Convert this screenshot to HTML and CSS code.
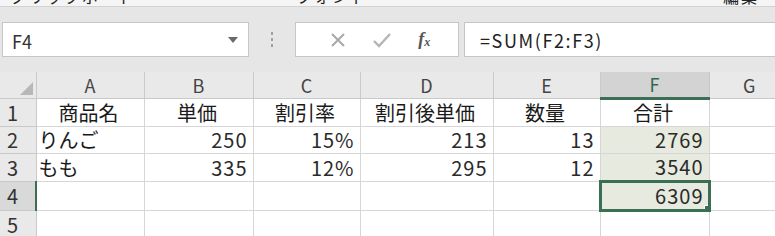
FILE: index.html
```html
<!DOCTYPE html>
<html lang="ja">
<head>
    <meta charset="UTF-8">
    <title>Sheet</title>
    <link rel="stylesheet" href="styles.css">
</head>
<body>
    <div class="ribbon-tail">
        <span class="group-label left">クリップボード</span>
        <span class="group-label mid">フォント</span>
        <span class="group-label right">編集</span>
    </div>

    <div class="formula-bar">
        <div class="name-box">
            <span>F4</span>
            <svg class="drop" width="10" height="6" viewBox="0 0 10 6"><path d="M0 0h10L5 6z" fill="#6a6a6a"/></svg>
        </div>
        <div class="grip">
            <i></i><i></i><i></i>
        </div>
        <div class="fn-buttons">
            <svg width="16" height="16" viewBox="0 0 16 16"><path d="M2 2l12 12M14 2L2 14" stroke="#a8a8a8" stroke-width="2" fill="none"/></svg>
            <svg width="18" height="16" viewBox="0 0 18 16"><path d="M1 9l5 5L17 2" stroke="#b4b4b4" stroke-width="2.4" fill="none"/></svg>
            <span class="fx">f<sub>x</sub></span>
        </div>
        <div class="formula-input">=SUM(F2:F3)</div>
    </div>

    <table class="sheet">
        <colgroup>
            <col style="width:36px">
            <col style="width:108px">
            <col style="width:109px">
            <col style="width:107px">
            <col style="width:133px">
            <col style="width:107px">
            <col style="width:109px">
            <col>
        </colgroup>
        <thead>
            <tr>
                <th class="corner"><span class="tri"></span></th>
                <th>A</th>
                <th>B</th>
                <th>C</th>
                <th>D</th>
                <th>E</th>
                <th class="active-col">F</th>
                <th>G</th>
            </tr>
        </thead>
        <tbody>
            <tr>
                <th>1</th>
                <td class="c">商品名</td>
                <td class="c">単価</td>
                <td class="c">割引率</td>
                <td class="c">割引後単価</td>
                <td class="c">数量</td>
                <td class="c">合計</td>
                <td></td>
            </tr>
            <tr>
                <th>2</th>
                <td>りんご</td>
                <td class="n">250</td>
                <td class="n">15%</td>
                <td class="n">213</td>
                <td class="n">13</td>
                <td class="n sel">2769</td>
                <td></td>
            </tr>
            <tr>
                <th>3</th>
                <td>もも</td>
                <td class="n">335</td>
                <td class="n">12%</td>
                <td class="n">295</td>
                <td class="n">12</td>
                <td class="n sel">3540</td>
                <td></td>
            </tr>
            <tr>
                <th class="active-row">4</th>
                <td></td>
                <td></td>
                <td></td>
                <td></td>
                <td></td>
                <td class="n sel current">6309</td>
                <td></td>
            </tr>
            <tr>
                <th>5</th>
                <td></td>
                <td></td>
                <td></td>
                <td></td>
                <td></td>
                <td></td>
                <td></td>
            </tr>
        </tbody>
    </table>
</body>
</html>
```

FILE: styles.css
```css
body {
    margin: 0;
    background-color: #e6e6e6;
    font-family: "Noto Sans CJK JP", "Liberation Sans", sans-serif;
    color: #1a1a1a;
    overflow: hidden;
    width: 775px;
    height: 236px;
}

.ribbon-tail {
    height: 6px;
    background-color: #f5f5f5;
    border-bottom: 1px solid #d2d2d2;
    overflow: hidden;
    display: flex;
    font-size: 16px;
    line-height: 16px;
    color: #222;
}

.group-label {
    display: block;
    margin-top: -12px;
    letter-spacing: 2px;
}

.group-label.left {
    margin-left: 10px;
}

.group-label.mid {
    margin-left: 160px;
}

.group-label.right {
    margin-left: 355px;
}

.formula-bar {
    display: flex;
    align-items: stretch;
    height: 35px;
    margin-top: 15px;
    padding-left: 2px;
}

.name-box {
    width: 247px;
    background: #fff;
    border: 1px solid #c6c6c6;
    display: flex;
    align-items: center;
    justify-content: space-between;
    padding: 0 10px 0 9px;
    box-sizing: border-box;
    font-size: 18px;
    color: #333;
}

.name-box span {
    margin-top: 2px;
}

.grip {
    width: 46px;
    display: flex;
    flex-direction: column;
    align-items: center;
    justify-content: center;
    gap: 3px;
}

.grip i {
    width: 2px;
    height: 3px;
    background: #a0a0a0;
}

.fn-buttons {
    width: 164px;
    background: #fff;
    border: 1px solid #c6c6c6;
    box-sizing: border-box;
    display: flex;
    align-items: center;
    justify-content: space-around;
    padding: 0 14px 0 20px;
    margin-right: 5px;
}

.fx {
    font-family: "Liberation Serif", serif;
    font-style: italic;
    font-weight: bold;
    font-size: 18px;
    color: #555;
}

.fx sub {
    font-size: 12px;
    vertical-align: -1px;
}

.formula-input {
    flex: 1;
    background: #fff;
    border: 1px solid #c6c6c6;
    border-right: none;
    display: flex;
    align-items: center;
    padding-left: 15px;
    font-size: 18px;
    color: #222;
    letter-spacing: 1.6px;
}

.sheet {
    margin-top: 15px;
    border-collapse: collapse;
    table-layout: fixed;
    width: 790px;
    background: #fff;
}

.sheet th,
.sheet td {
    border: 1px solid #d6d6d6;
    height: 26px;
    padding: 0 5px 0 2px;
    font-weight: normal;
    font-size: 20px;
    line-height: 26px;
    white-space: nowrap;
    overflow: hidden;
}

.sheet thead th {
    height: 25px;
    line-height: 25px;
    background: #e9e9e9;
    border-color: #c9c9c9;
    border-top: none;
    color: #444;
    font-size: 18px;
    text-align: center;
    padding: 0;
}

.sheet tbody th {
    background: #e9e9e9;
    border-color: #c9c9c9;
    color: #333;
    text-align: left;
    padding-left: 7px;
    border-left: none;
}

.sheet .corner {
    position: relative;
    border-left: none;
}

.tri {
    position: absolute;
    right: 3px;
    bottom: 3px;
    width: 0;
    height: 0;
    border-left: 13px solid transparent;
    border-bottom: 13px solid #b8b8b8;
}

.sheet thead .active-col {
    background: #d3d3d3;
    color: #2f6a4c;
    border-bottom: 3px solid #3b6f55;
}

.sheet tbody .active-row {
    background: #d9d9d9;
    border-right: 2px solid #3b6f55;
}

.c {
    text-align: center;
}

.n {
    text-align: right;
    letter-spacing: 1px;
    color: #2a2a2a;
}

.sel {
    background: #e7eadf;
}

.sheet td.current {
    position: relative;
    border: 3px solid #3b6f55;
    line-height: 22px;
    padding-right: 4px;
}

.current::after {
    content: "";
    position: absolute;
    right: -4px;
    bottom: -4px;
    width: 6px;
    height: 6px;
    background: #3b6f55;
    border: 1px solid #fff;
}
```
